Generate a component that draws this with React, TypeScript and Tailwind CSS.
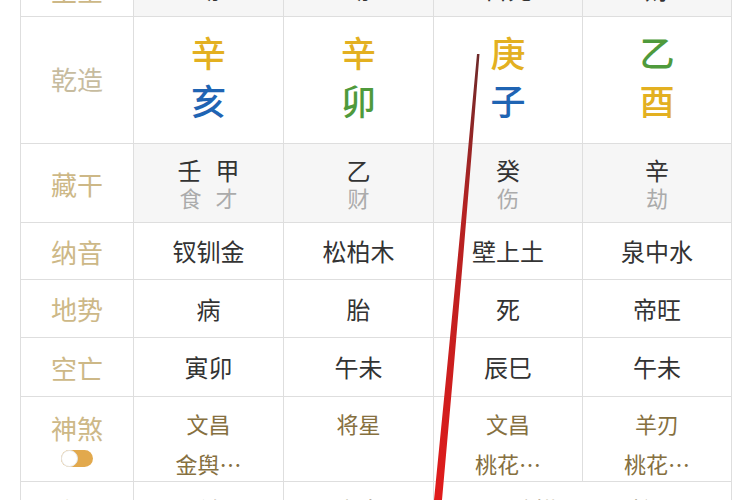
import React from "react";

type Cell = { text: string; sub?: string };

const font = { fontFamily: '"Noto Sans CJK SC", "Noto Sans", sans-serif' };

const simpleRows: { label: string; cells: string[]; h: string }[] = [
  { label: "纳音", cells: ["钗钏金", "松柏木", "壁上土", "泉中水"], h: "h-[56px]" },
  { label: "地势", cells: ["病", "胎", "死", "帝旺"], h: "h-[57px]" },
  { label: "空亡", cells: ["寅卯", "午未", "辰巳", "午未"], h: "h-[58px]" },
];

const hidden: Cell[] = [
  { text: "壬甲", sub: "食才" },
  { text: "乙", sub: "财" },
  { text: "癸", sub: "伤" },
  { text: "辛", sub: "劫" },
];

const pillars = [
  { gan: "辛", ganColor: "text-[#e3b021]", zhi: "亥", zhiColor: "text-[#1f64b3]" },
  { gan: "辛", ganColor: "text-[#e3b021]", zhi: "卯", zhiColor: "text-[#4f9a3c]" },
  { gan: "庚", ganColor: "text-[#e3b021]", zhi: "子", zhiColor: "text-[#1f64b3]" },
  { gan: "乙", ganColor: "text-[#4f9a3c]", zhi: "酉", zhiColor: "text-[#e3b021]" },
];

const shensha = [["文昌", "金舆…"], ["将星"], ["文昌", "桃花…"], ["羊刃", "桃花…"]];

function Label({ children }: { children: React.ReactNode }) {
  return (
    <div className="bg-white flex items-center justify-center text-[26px] text-[#cdb887]">
      {children}
    </div>
  );
}

function Spaced({ text }: { text: string }) {
  return (
    <span className="flex justify-center gap-[14px]">
      {text.split("").map((c, i) => (
        <span key={i}>{c}</span>
      ))}
    </span>
  );
}

export default function App() {
  return (
    <div className="relative w-[750px] h-[500px] overflow-hidden bg-white" style={font}>
      <div className="ml-[20px] -mt-[29px] w-[712px] grid grid-cols-[112px_149px_149px_148px_148px] gap-px p-px bg-[#dedede]">
        {/* header row, mostly scrolled off */}
        <div className="h-[44px] pb-[10px] bg-white flex items-center justify-center text-[26px] text-[#cdb887]">
          主星
        </div>
        {["劫", "劫", "日元", "财"].map((t, i) => (
          <div key={i} className="h-[44px] pb-[10px] bg-[#f6f6f6] flex items-center justify-center text-[24px] text-[#333]">
            {t}
          </div>
        ))}

        {/* 乾造 */}
        <div className="h-[126px] pb-[4px] bg-white flex items-center justify-center text-[26px] text-[#c7bc9f]">乾造</div>
        {pillars.map((p, i) => (
          <div key={i} className="h-[126px] pb-[8px] bg-white flex flex-col items-center justify-center text-[35px] leading-[48px] font-medium">
            <span className={p.ganColor}>{p.gan}</span>
            <span className={p.zhiColor}>{p.zhi}</span>
          </div>
        ))}

        {/* 藏干 */}
        <Label>藏干</Label>
        {hidden.map((c, i) => (
          <div key={i} className="h-[78px] bg-[#f6f6f6] flex flex-col items-center justify-center">
            <div className="text-[24px] leading-[29px] text-[#333]">
              <Spaced text={c.text} />
            </div>
            <div className="text-[22px] leading-[27px] text-[#ababab]">
              <Spaced text={c.sub ?? ""} />
            </div>
          </div>
        ))}

        {simpleRows.map((r) => (
          <React.Fragment key={r.label}>
            <Label>{r.label}</Label>
            {r.cells.map((c, i) => (
              <div key={i} className={`${r.h} bg-white flex items-center justify-center text-[24px] text-[#333]`}>
                {c}
              </div>
            ))}
          </React.Fragment>
        ))}

        {/* 神煞 */}
        <div className="h-[84px] bg-white flex flex-col items-center justify-center gap-[6px] text-[26px] text-[#cdb887]">
          <span className="leading-[32px]">神煞</span>
          <span className="relative w-[32px] h-[17px] rounded-full bg-[#e2a94d]">
            <span className="absolute left-0 top-0 w-[17px] h-[17px] rounded-full bg-white border border-[#e6e6e6]" />
          </span>
        </div>
        {shensha.map((lines, i) => (
          <div key={i} className="h-[84px] bg-white flex flex-col items-center pt-[6px] text-[22px] leading-[40px] text-[#86703f]">
            {lines.map((l) => (
              <span key={l}>{l}</span>
            ))}
          </div>
        ))}

        {/* 胎元 */}
        <Label>胎元</Label>
        <div className="h-[56px] bg-white flex items-center justify-center text-[24px] text-[#86703f]">壬午</div>
        <div className="h-[56px] bg-white flex items-center justify-center text-[24px] text-[#86703f]">庚申</div>
        <div className="col-span-2 h-[56px] bg-white flex items-center justify-center text-[24px] text-[#86703f]">
          暗拱从日四柱
        </div>
      </div>

      {/* hand-drawn red annotation stroke */}
      <svg className="absolute inset-0 pointer-events-none" width="750" height="500" viewBox="0 0 750 500">
        <defs>
          <linearGradient id="stroke" x1="0" y1="0" x2="0" y2="1">
            <stop offset="0" stopColor="#6e2a2a" />
            <stop offset="0.35" stopColor="#b42222" />
            <stop offset="1" stopColor="#e01b1b" />
          </linearGradient>
        </defs>
        <path d="M477 54 L479.5 54 Q462 280 442 500 L434 500 Q456 280 477 54 Z" fill="url(#stroke)" />
      </svg>
    </div>
  );
}
